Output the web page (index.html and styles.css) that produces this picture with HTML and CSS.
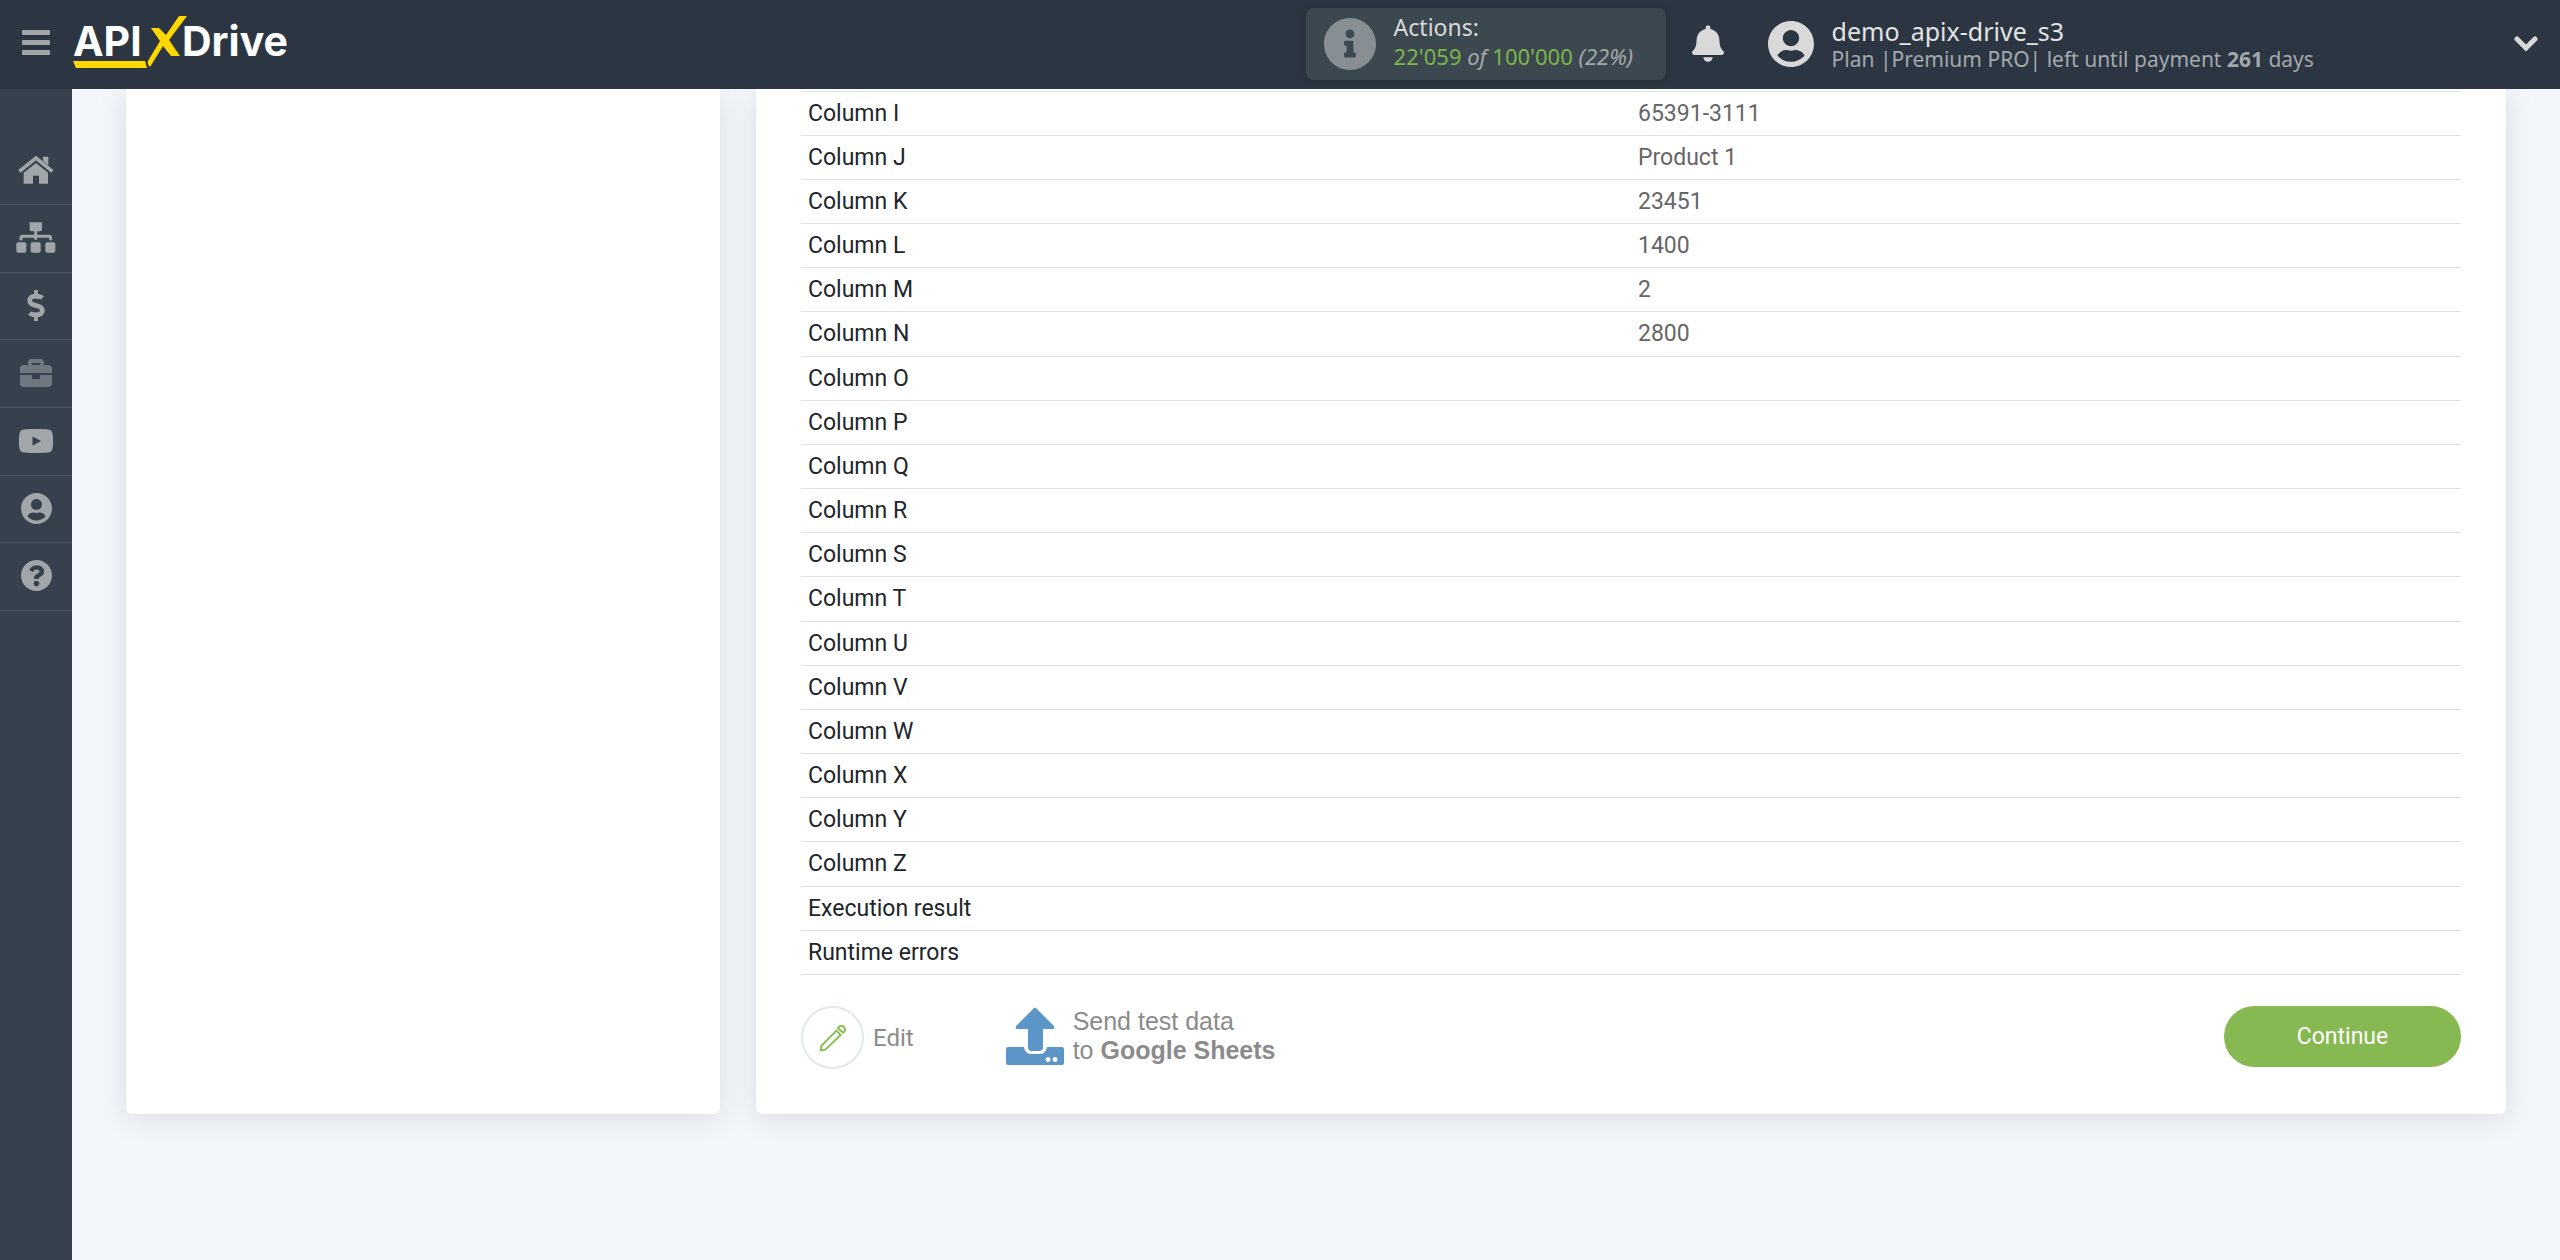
FILE: index.html
```html
<!DOCTYPE html>
<html lang="en">
<head>
<meta charset="utf-8">
<title>ApiX-Drive</title>
<link rel="stylesheet" href="styles.css">
</head>
<body>
<header class="topbar">
  <div class="brand">
    <button class="menu-btn" type="button" aria-label="Menu"><span></span><span></span><span></span></button>
    <a class="logo" href="#" aria-label="ApiX-Drive">
      <svg width="224" height="56" viewBox="0 0 224 56">
        <text class="logo-text" x="0" y="41">API</text>
        <text class="logo-text" x="109" y="41">Drive</text>
        <path class="logo-mark" d="M0 46h72l2 7H3zM106 1h8L96 25l11 16h-9l-8-10-13 21c-2-2-3-5-2-6l12-20-9-13h8l7 7z"/>
      </svg>
    </a>
  </div>
  <div class="status">
    <div class="usage">
      <svg class="usage-icon" width="52" height="52" viewBox="8 8 496 496"><path d="M256 8C119.043 8 8 119.083 8 256c0 136.997 111.043 248 248 248s248-111.003 248-248C504 119.083 392.957 8 256 8zm0 110c23.196 0 42 18.804 42 42s-18.804 42-42 42-42-18.804-42-42 18.804-42 42-42zm56 254c0 6.627-5.373 12-12 12h-88c-6.627 0-12-5.373-12-12v-24c0-6.627 5.373-12 12-12h12v-64h-12c-6.627 0-12-5.373-12-12v-24c0-6.627 5.373-12 12-12h64c6.627 0 12 5.373 12 12v100h12c6.627 0 12 5.373 12 12v24z"/></svg>
      <div class="usage-text">
        <div class="usage-title">Actions:</div>
        <div class="usage-count"><span class="num">22'059</span> <i>of</i> <span class="num">100'000</span> <i>(22%)</i></div>
      </div>
    </div>
    <button class="icon-btn bell" type="button" aria-label="Notifications">
      <svg width="32" height="37" viewBox="0 0 448 512"><path d="M224 512c35.32 0 63.97-28.65 63.97-64H160.03c0 35.35 28.65 64 63.97 64zm215.39-149.71c-19.32-20.76-55.47-51.99-55.47-154.29 0-77.7-54.48-139.9-127.94-155.16V32c0-17.67-14.32-32-31.98-32s-31.98 14.33-31.98 32v20.84C118.56 68.1 64.08 130.3 64.08 208c0 102.3-36.15 133.53-55.47 154.29-6 6.45-8.66 14.16-8.61 21.71.11 16.4 12.98 32 32.1 32h383.8c19.12 0 32-15.6 32.1-32 .05-7.55-2.61-15.27-8.61-21.71z"/></svg>
    </button>
    <svg class="avatar" width="46" height="46" viewBox="0 8 496 496"><path d="M248 8C111 8 0 119 0 256s111 248 248 248 248-111 248-248S385 8 248 8zm0 96c48.600 0 88 39.400 88 88s-39.400 88-88 88-88-39.400-88-88 39.400-88 88-88zm0 344c-58.700 0-111.300-26.600-146.500-68.200 18.800-35.400 55.600-59.800 98.500-59.800 2.400 0 4.800.4 7.100 1.100 13 4.200 26.600 6.900 40.900 6.900 14.300 0 28-2.700 40.900-6.900 2.300-.7 4.700-1.100 7.100-1.100 42.900 0 79.700 24.400 98.500 59.800C359.300 421.400 306.700 448 248 448z"/></svg>
    <div class="account">
      <div class="account-name">demo_apix-drive_s3</div>
      <div class="account-plan">Plan |Premium PRO| left until payment <b>261</b> days</div>
    </div>
    <button class="icon-btn more" type="button" aria-label="Account menu">
      <svg width="24" height="17" viewBox="0 0 24 17"><path class="chevron" d="M3 4l9 9 9-9"/></svg>
    </button>
  </div>
</header>
<div class="layout">
  <nav class="sidebar">
    <a href="#" aria-label="Home"><svg width="36" height="28" viewBox="55 79 108 84"><path d="M59 125l50-40 49 40" fill="none" stroke="currentColor" stroke-width="11"/><path d="M130 81h16v26l-16-13zM109 100l36 29v33h-27v-24h-18v24H72v-33z"/></svg></a>
    <a href="#" aria-label="Connections"><svg width="40" height="31" viewBox="50 278 120 93"><path d="M91 279h37v21q0 6-6 6h-25q-6 0-6-6z"/><path d="M109 305v26M65 333v-7q0-5 5-5h79q5 0 5 5v7" fill="none" stroke="currentColor" stroke-width="9"/><rect x="51" y="339" width="30" height="31" rx="6"/><rect x="94" y="339" width="30" height="31" rx="6"/><rect x="138" y="339" width="30" height="31" rx="6"/></svg></a>
    <a href="#" aria-label="Billing"><svg width="18" height="31" viewBox="0 0 288 512"><path d="M209.200 233.400l-108-31.600C88.700 198.200 80 186.500 80 173.500c0-16.300 13.200-29.500 29.500-29.500h66.300c12.200 0 24.200 3.700 34.200 10.500 6.100 4.100 14.300 3.100 19.500-2l34.800-34c7.100-6.900 6.100-18.400-1.800-24.500C238 74.800 207.400 64.100 176 64V16c0-8.800-7.200-16-16-16h-32c-8.800 0-16 7.200-16 16v48h-2.500C45.800 64-5.400 118.700.5 183.600c4.200 46.100 39.400 83.600 83.800 96.600l102.500 30c12.500 3.700 21.200 15.300 21.200 28.300 0 16.300-13.200 29.500-29.500 29.500h-66.300C100 368 88 364.300 78 357.500c-6.100-4.100-14.300-3.100-19.500 2l-34.800 34c-7.100 6.900-6.100 18.400 1.800 24.500 24.500 19.200 55.100 29.900 86.500 30v48c0 8.800 7.200 16 16 16h32c8.800 0 16-7.200 16-16v-48.200c46.600-.9 90.300-28.600 105.700-72.700 21.500-61.600-14.600-124.800-72.500-141.700z"/></svg></a>
    <a class="dim" href="#" aria-label="Business"><svg width="32" height="32" viewBox="0 0 512 512"><path d="M320 336c0 8.840-7.160 16-16 16h-96c-8.840 0-16-7.160-16-16v-48H0v144c0 25.600 22.400 48 48 48h416c25.600 0 48-22.400 48-48V288H320v48zm144-208h-80V80c0-25.600-22.400-48-48-48H176c-25.600 0-48 22.400-48 48v48H48c-25.600 0-48 22.400-48 48v80h512v-80c0-25.600-22.400-48-48-48zm-144 0H192V96h128v32z"/></svg></a>
    <a href="#" aria-label="Videos"><svg width="36" height="32" viewBox="0 0 576 512"><path d="M549.655 124.083c-6.281-23.650-24.787-42.276-48.284-48.597C458.781 64 288 64 288 64S117.220 64 74.629 75.486c-23.497 6.322-42.003 24.947-48.284 48.597-11.412 42.867-11.412 132.305-11.412 132.305s0 89.438 11.412 132.305c6.281 23.650 24.787 41.500 48.284 47.821C117.220 448 288 448 288 448s170.780 0 213.371-11.486c23.497-6.321 42.003-24.171 48.284-47.821 11.412-42.867 11.412-132.305 11.412-132.305s0-89.438-11.412-132.305zM232 332V182l138 75z"/></svg></a>
    <a href="#" aria-label="Profile"><svg width="31" height="31" viewBox="0 8 496 496"><path d="M248 8C111 8 0 119 0 256s111 248 248 248 248-111 248-248S385 8 248 8zm0 96c48.600 0 88 39.400 88 88s-39.400 88-88 88-88-39.400-88-88 39.400-88 88-88zm0 344c-58.700 0-111.300-26.600-146.500-68.200 18.800-35.400 55.600-59.800 98.500-59.800 2.400 0 4.800.4 7.100 1.100 13 4.200 26.600 6.900 40.900 6.900 14.300 0 28-2.700 40.900-6.900 2.300-.7 4.700-1.100 7.100-1.100 42.900 0 79.700 24.400 98.500 59.800C359.300 421.400 306.700 448 248 448z"/></svg></a>
    <a href="#" aria-label="Help"><svg width="31" height="31" viewBox="8 8 496 496"><path d="M504 256c0 136.997-111.043 248-248 248S8 392.997 8 256C8 119.083 119.043 8 256 8s248 111.083 248 248zM262.655 90c-54.497 0-89.255 22.957-116.549 63.758-3.536 5.286-2.353 12.415 2.715 16.258l34.699 26.310c5.205 3.947 12.621 3.008 16.665-2.122 17.864-22.658 30.113-35.797 57.303-35.797 20.429 0 45.698 13.148 45.698 32.958 0 14.976-12.363 22.667-32.534 33.976C247.128 238.528 216 254.941 216 296v4c0 6.627 5.373 12 12 12h56c6.627 0 12-5.373 12-12v-1.333c0-28.462 83.186-29.647 83.186-106.667 0-58.002-60.165-102-116.531-102zM256 338c-25.365 0-46 20.635-46 46 0 25.364 20.635 46 46 46s46-20.636 46-46c0-25.365-20.635-46-46-46z"/></svg></a>
  </nav>
  <main class="content">
    <aside class="card side-card"></aside>
    <section class="card main-card">
      <table class="fields">
        <tbody>
          <tr><th scope="row">Column I</th><td>65391-3111</td></tr>
          <tr><th scope="row">Column J</th><td>Product 1</td></tr>
          <tr><th scope="row">Column K</th><td>23451</td></tr>
          <tr><th scope="row">Column L</th><td>1400</td></tr>
          <tr><th scope="row">Column M</th><td>2</td></tr>
          <tr><th scope="row">Column N</th><td>2800</td></tr>
          <tr><th scope="row">Column O</th><td></td></tr>
          <tr><th scope="row">Column P</th><td></td></tr>
          <tr><th scope="row">Column Q</th><td></td></tr>
          <tr><th scope="row">Column R</th><td></td></tr>
          <tr><th scope="row">Column S</th><td></td></tr>
          <tr><th scope="row">Column T</th><td></td></tr>
          <tr><th scope="row">Column U</th><td></td></tr>
          <tr><th scope="row">Column V</th><td></td></tr>
          <tr><th scope="row">Column W</th><td></td></tr>
          <tr><th scope="row">Column X</th><td></td></tr>
          <tr><th scope="row">Column Y</th><td></td></tr>
          <tr><th scope="row">Column Z</th><td></td></tr>
          <tr><th scope="row">Execution result</th><td></td></tr>
          <tr><th scope="row">Runtime errors</th><td></td></tr>
        </tbody>
      </table>
      <div class="actions">
        <button class="edit-btn" type="button">
          <span class="ring"><svg width="28" height="28" viewBox="116 101 84 84"><path d="M121 180l2-13 45-46 13 13-46 44zM173 113q7-10 15-5l5 5q4 7-5 14z"/></svg></span>
          Edit
        </button>
        <button class="send-btn" type="button">
          <svg width="58" height="58" viewBox="0 0 58 58"><path d="M28 1q1-1 2 0l18 18q1 3-1 3H37v18q0 4-4 4h-7q-4 0-4-4V22H11q-2 0-1-3z"/><path fill-rule="evenodd" d="M2 40h16q1 7 7 7h9q6 0 7-7h15q2 0 2 2v14q0 2-2 2H2q-2 0-2-2V42q0-2 2-2zm40 10a2 2 0 1 0 .1 5 2 2 0 0 0-.1-5zm7 0a2 2 0 1 0 .1 5 2 2 0 0 0-.1-5z"/></svg>
          <span>Send test data<br>to <b>Google Sheets</b></span>
        </button>
        <button class="continue-btn" type="button">Continue</button>
      </div>
    </section>
  </main>
</div>
</body>
</html>
```
FILE: styles.css
```css
* { box-sizing: border-box; }

body {
  margin: 0;
  min-height: 100vh;
  display: flex;
  flex-direction: column;
  background: #f3f6fb;
  font-family: Roboto, sans-serif;
  font-size: 23px;
}

button {
  border: 0;
  padding: 0;
  background: none;
  font: inherit;
  cursor: pointer;
}

svg { display: block; flex: none; fill: currentColor; }

/* Top bar */
.topbar {
  display: grid;
  grid-template-columns: 51fr 49fr;
  height: 89px;
  background: #2b3642;
  font-family: "Noto Sans", sans-serif;
}

.brand {
  display: flex;
  align-items: center;
  gap: 23px;
  padding-left: 22px;
}

.menu-btn { display: grid; gap: 5px; padding-bottom: 4px; }
.menu-btn span { width: 28px; height: 5px; border-radius: 1px; background: #a1a6ab; }

.logo { padding-bottom: 4px; }
.logo-text { fill: #fff; font: 700 41px Inter, sans-serif; }
.logo-mark { fill: #ffd800; }

.status {
  display: flex;
  align-items: center;
  padding-bottom: 2px;
  color: #d9d9d9;
}

.usage {
  display: flex;
  align-items: center;
  gap: 18px;
  width: 360px;
  height: 72px;
  padding-left: 18px;
  border-radius: 8px;
  background: #3b4850;
  box-shadow: 0 0 8px rgba(0, 0, 0, .15);
}

.usage-icon { color: #878f95; }
.usage-text { line-height: 29px; padding-bottom: 4px; }
.usage-count { font-size: 22px; color: #a4a8a9; }
.num { color: #7fb54a; }

.icon-btn { color: #d9d9d9; }
.bell { margin-left: 26px; }
.avatar { margin-left: 44px; }

.account { margin-left: 18px; padding-top: 3px; line-height: 28px; }
.account-name { font-size: 25px; color: #e3e3e3; }
.account-plan { font-size: 21px; color: #a3a8ad; }

.more { margin-left: auto; margin-right: 22px; }
.chevron { fill: none; stroke: currentColor; stroke-width: 5; stroke-linecap: round; }

/* Page body */
.layout { flex: 1; display: flex; }

.sidebar {
  flex: none;
  width: 72px;
  padding-top: 48px;
  background: #36414d;
  color: #a0a6aa;
}

.sidebar a {
  display: flex;
  align-items: center;
  justify-content: center;
  height: 68px;
  padding-bottom: 2px;
  border-bottom: 1px solid #4a545f;
  color: inherit;
}

.sidebar a:nth-child(3n) { height: 67px; }
.sidebar .dim { color: #6f7780; }

.content {
  flex: 1;
  display: grid;
  grid-template-columns: 594fr 1750fr;
  gap: 36px;
  align-items: stretch;
  align-content: start;
  padding: 0 54px 60px;
  overflow: hidden;
}

.card {
  background: #fff;
  border-radius: 0 0 6px 6px;
  box-shadow: 0 4px 30px rgba(30, 40, 50, .12);
}

.main-card { padding: 2px 45px 45px; }

.fields {
  width: 100%;
  table-layout: fixed;
  border-collapse: separate;
  border-spacing: 0;
  border-top: 1px solid #dedfe0;
}

.fields th, .fields td {
  height: 44px;
  padding: 0 7px;
  border-bottom: 1px solid #dedfe0;
  text-align: left;
  font-weight: 400;
  line-height: 40px;
  color: #212529;
}

.fields td { color: #666; }
.fields tr:nth-child(6n) th { height: 45px; }

.actions {
  display: flex;
  align-items: flex-start;
  padding-top: 31px;
}

.edit-btn {
  display: flex;
  align-items: center;
  gap: 9px;
  font-size: 24px;
  color: #8b8b8b;
}

.ring {
  display: grid;
  place-items: center;
  width: 63px;
  height: 63px;
  border: 2px solid #e1eae8;
  border-radius: 50%;
}

.ring svg { fill: none; stroke: #8bbf56; stroke-width: 6; }

.send-btn {
  display: flex;
  align-items: center;
  gap: 9px;
  margin: 1px 0 0 92px;
  text-align: left;
  font: 25px/29px "Liberation Sans", Arial, sans-serif;
  color: #8b8b8b;
}

.send-btn svg { color: #5c95c7; }

.continue-btn {
  width: 237px;
  height: 61px;
  margin-left: auto;
  border-radius: 31px;
  background: #86b951;
  color: #fff;
}
```
